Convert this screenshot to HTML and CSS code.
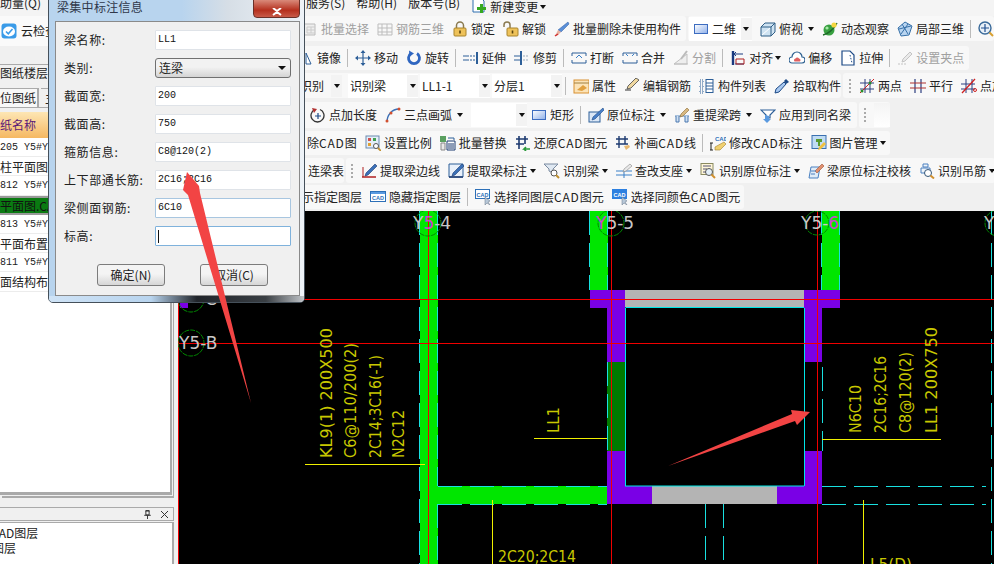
FILE: index.html
```html
<!DOCTYPE html>
<html lang="zh">
<head>
<meta charset="utf-8">
<title>梁集中标注信息</title>
<link rel="stylesheet" href="styles.css">
</head>
<body>
<svg class="sprite" xmlns="http://www.w3.org/2000/svg">
<symbol id="cloud" viewBox="0 0 16 16"><rect x="0.5" y="0.5" width="15" height="15" rx="3" fill="#3a9be8"/><ellipse cx="8" cy="8.5" rx="6" ry="5" fill="#fff"/><path d="M5 8.5l2.3 2.3L11.5 6" fill="none" stroke="#3a9be8" stroke-width="1.6"/></symbol>
<symbol id="newc" viewBox="0 0 16 16"><path d="M2 1h8l3 3v11H2z" fill="#fff" stroke="#2e6fb0"/><path d="M9 7h3v3h3v3h-3v3H9v-3H6v-3h3z" fill="#35a820"/></symbol>
<symbol id="sel" viewBox="0 0 16 16"><path d="M2 3h11v11H2z" fill="#eee" stroke="#bbb"/><path d="M5 6h8M5 9h8M5 12h8M5 6v6M9 6v6" stroke="#ccc"/></symbol>
<symbol id="r3d" viewBox="0 0 16 16"><path d="M1 3h14v11H1zM5 3v11M10 3v11M1 7h14M1 11h14" fill="none" stroke="#bdbdbd"/></symbol>
<symbol id="lock" viewBox="0 0 16 16"><path d="M4.5 7V4.5a3.5 3.5 0 0 1 7 0V7" fill="none" stroke="#8a7a50" stroke-width="1.5"/><rect x="2" y="7" width="12" height="8" rx="1" fill="#eec25a" stroke="#a8842c"/><path d="M8 9.5v3" stroke="#5a4510" stroke-width="1.6"/></symbol>
<symbol id="unlock" viewBox="0 0 16 16"><path d="M1 6V4a3 3 0 0 1 6 0v3" fill="none" stroke="#8a7a50" stroke-width="1.5"/><rect x="4" y="7" width="11" height="8" rx="1" fill="#eec25a" stroke="#a8842c"/><path d="M9.5 9.5v3" stroke="#5a4510" stroke-width="1.6"/></symbol>
<symbol id="del" viewBox="0 0 16 16"><path d="M14 1l1 2-8 8-3-2z" fill="#5a8fd8" stroke="#2c5aa0" stroke-width=".5"/><path d="M4 9l3 2-3 3-3 1z" fill="#e8b0a0"/><path d="M1 15l3-2" stroke="#d03030" stroke-width="1.5"/></symbol>
<symbol id="d2" viewBox="0 0 16 16"><defs><linearGradient id="bl" x2="1" y2="1"><stop offset="0" stop-color="#fff"/><stop offset="1" stop-color="#8fb0ea"/></linearGradient></defs><rect x="1.5" y="3.5" width="13" height="9" fill="url(#bl)" stroke="#3c6cc0"/></symbol>
<symbol id="cube" viewBox="0 0 16 16"><path d="M1 6l4-4h10v9l-4 4H1z" fill="#cfe3f2" stroke="#2f5e86"/><path d="M1 6h10v9M11 6l4-4" fill="none" stroke="#2f5e86"/><path d="M2 14l8-7" stroke="#fff"/></symbol>
<symbol id="orbit" viewBox="0 0 16 16"><circle cx="7" cy="9" r="5.5" fill="#38a040"/><path d="M1 14C6 13 12 8 15 2" stroke="#1e6a28" stroke-width="1.4" fill="none"/><circle cx="12" cy="4" r="2.6" fill="#f4d640"/><circle cx="5" cy="7" r="1.6" fill="#a8e8a8"/></symbol>
<symbol id="l3d" viewBox="0 0 16 16"><path d="M8 1l7 4-3 9-8 1-3-8z" fill="#b8d4f0" stroke="#3670a8"/><path d="M5 3l6 10M11 3L4 13M2 8l12-3" stroke="#3670a8"/></symbol>
<symbol id="zoom" viewBox="0 0 16 16"><circle cx="7" cy="7" r="6" fill="#e8f0f8" stroke="#3a6a9a" stroke-width="1.4"/><path d="M7 3v8M3 7h8" stroke="#1f4f90" stroke-width="1.2"/><path d="M11.5 11.5l3.5 3.5" stroke="#d8a030" stroke-width="2"/></symbol>
<symbol id="mirror" viewBox="0 0 16 16"><path d="M8 3l5 11H8zM6 3v11" fill="#fff" stroke="#2d5f98"/></symbol>
<symbol id="move" viewBox="0 0 16 16"><path d="M8 1v14M1 8h14" stroke="#2d5f98" stroke-width="1.2"/><path d="M8 0l2.5 3h-5zM8 16l2.5-3h-5zM0 8l3-2.5v5zM16 8l-3-2.5v5z" fill="#2d5f98"/></symbol>
<symbol id="rotate" viewBox="0 0 16 16"><path d="M5 3.5a5.5 5.5 0 1 0 6 0" fill="none" stroke="#2f66c0" stroke-width="2.8"/><path d="M3 .5l5 3-4.5 3z" fill="#2f66c0"/></symbol>
<symbol id="extend" viewBox="0 0 16 16"><path d="M14 2v12" stroke="#2d5f98" stroke-width="2"/><path d="M0 6h6M0 10h6" stroke="#2d5f98"/><path d="M7 6h5M7 10h5" stroke="#2d5f98" stroke-dasharray="2 1"/></symbol>
<symbol id="trim" viewBox="0 0 16 16"><path d="M7 1v14" stroke="#2d5f98" stroke-width="2"/><path d="M0 6h6M0 10h6" stroke="#2d5f98"/><path d="M9 6h6M9 10h6" stroke="#9ab" stroke-dasharray="2 1"/></symbol>
<symbol id="brk" viewBox="0 0 16 16"><path d="M1 6V3h14v3M1 10v3h14v-3" fill="none" stroke="#2d5f98"/><path d="M5 8l3-3 3 3" fill="none" stroke="#3a80c8"/></symbol>
<symbol id="merge" viewBox="0 0 16 16"><path d="M1 6V3h14v3M1 10v3h14v-3" fill="none" stroke="#2d5f98"/><path d="M4 4l2 2M12 4l-2 2" stroke="#3a80c8"/></symbol>
<symbol id="split" viewBox="0 0 16 16"><path d="M1 14L14 4v10zM1 14h14" fill="#eee" stroke="#c0c0c0"/><path d="M14 1L8 9" stroke="#bbb" stroke-width="2"/></symbol>
<symbol id="align" viewBox="0 0 16 16"><path d="M3 1v14" stroke="#1a3a80" stroke-width="2.4"/><path d="M5 4h8M5 14h9" stroke="#1a3a80"/><path d="M6 2L4 4l2 2" fill="none" stroke="#1a3a80"/><path d="M6 9h8v5H6z" fill="none" stroke="#b02020"/></symbol>
<symbol id="offset" viewBox="0 0 16 16"><path d="M3 13a3 3 0 0 1 0-6 5 5 0 0 1 10 0 3 3 0 0 1 0 6z" fill="#fff" stroke="#2d6090" stroke-width="1.2"/><path d="M5.500 11.500a2 2 0 0 1 1-3 2 2 0 0 1 3.500 0 2 2 0 0 1 1 3z" fill="#e06060"/></symbol>
<symbol id="stretch" viewBox="0 0 16 16"><path d="M2 1h8l4 4v10H2z" fill="#fff" stroke="#1d4a86" stroke-width="1.2"/><path d="M10 5l2 8" stroke="#1d4a86" stroke-dasharray="1.500 1.500"/></symbol>
<symbol id="grip" viewBox="0 0 16 16"><path d="M1 14h8" stroke="#c4c4c4" stroke-dasharray="2 1"/><path d="M13 2l2 2-7 7-3 1 1-3z" fill="#eaeaea" stroke="#c4c4c4"/></symbol>
<symbol id="prop" viewBox="0 0 16 16"><rect x="1" y="2" width="15" height="13" fill="#fbe3b8" stroke="#d89030"/><path d="M1 5h15" stroke="#a08040"/><path d="M4 12l6-5 4 3-5 3z" fill="#e0a040"/></symbol>
<symbol id="edit" viewBox="0 0 16 16"><path d="M1 12h6" stroke="#333"/><path d="M15 2l-8 8-4 1 1-3 8-8z" fill="#f0d8a0" stroke="#444" stroke-width=".8"/></symbol>
<symbol id="list" viewBox="0 0 16 16"><path d="M1 2h3v3H1zM1 7h3v3H1zM1 12h3v3H1z" fill="none" stroke="#2d5f98" stroke-dasharray="1 1"/><rect x="7" y="1.500" width="7" height="13" fill="#fff" stroke="#2d5f98"/><path d="M7 5h7M7 8h7M7 11h7" stroke="#2d5f98"/></symbol>
<symbol id="pick" viewBox="0 0 16 16"><path d="M12 1l3 3-3 2-2-3z" fill="#1d4a86"/><path d="M10 4l2 2-7 8-4 1 1-4z" fill="#a8c8f0" stroke="#1d4a86"/></symbol>
<symbol id="two" viewBox="0 0 16 16"><path d="M6 1v14M11 1v14M1 5h14M1 11h14" stroke="#2d3f80"/><path d="M1 15L15 1" stroke="#d02020"/><circle cx="3" cy="13" r="1.500" fill="#2a8a2a"/><circle cx="11" cy="5" r="1.500" fill="#2a8a2a"/></symbol>
<symbol id="par" viewBox="0 0 16 16"><path d="M5 1v14M11 1v14" stroke="#2d3f80" stroke-width="1.200"/><path d="M0 5h16M0 10h16" stroke="#b03030" stroke-width="1.200"/></symbol>
<symbol id="ptan" viewBox="0 0 16 16"><path d="M5 1v14M11 1v14M0 6h14M0 11h14" stroke="#2d3f80"/><path d="M1 15L14 1" stroke="#d02020" stroke-width="1.300"/><circle cx="14" cy="12" r="1.500" fill="none" stroke="#d02020"/></symbol>
<symbol id="addl" viewBox="0 0 16 16"><path d="M5 2.500a6.500 6.500 0 1 0 5 0" fill="none" stroke="#333" stroke-width="1.300"/><path d="M2 1l5 1-3 4z" fill="#b03030"/><path d="M8 6v6M5 9h6" stroke="#1d4a86" stroke-width="1.200"/></symbol>
<symbol id="arc" viewBox="0 0 16 16"><path d="M2 15C2 8 7 2 14 2" fill="none" stroke="#3a70b8" stroke-width="1.400"/><circle cx="2" cy="14" r="1.500" fill="#d05030"/><circle cx="14" cy="2" r="1.500" fill="#d05030"/><circle cx="6" cy="6" r="1.500" fill="#d05030"/></symbol>
<symbol id="orig" viewBox="0 0 16 16"><rect x="1" y="5" width="11" height="10" fill="#dbe7f6" stroke="#2d5f98"/><path d="M15 1l1 2-9 9-3 1 1-3z" fill="#4a80c8" stroke="#1d4a86" stroke-width=".6"/></symbol>
<symbol id="respan" viewBox="0 0 16 16"><path d="M1 9h14" stroke="#5a8ac0"/><path d="M2 9v6h3V9M11 9v6h3V9" fill="#cfe0f2" stroke="#4a78b0"/><path d="M13 1l2 2-6 6-3 1 1-3z" fill="#d8b880" stroke="#8a6a30" stroke-width=".6"/></symbol>
<symbol id="apply" viewBox="0 0 16 16"><path d="M1 3h14l-5 5v3H6V8z" fill="#fff" stroke="#2d5f98" stroke-width="1.200"/><path d="M5 8v4H3l4 4 4-4H9V9" fill="#5a9ae0"/></symbol>
<symbol id="scale" viewBox="0 0 16 16"><rect x="1" y="1" width="13" height="12" fill="#e4eef8" stroke="#6a8ab0"/><rect x="3" y="3" width="3" height="3" fill="#d05050"/><rect x="8" y="3" width="3" height="3" fill="#40a050"/><rect x="3" y="8" width="3" height="3" fill="#e0a030"/><circle cx="11" cy="11" r="2.500" fill="#fff" stroke="#555"/><path d="M13 13l3 3" stroke="#c09030" stroke-width="1.800"/></symbol>
<symbol id="repl" viewBox="0 0 16 16"><rect x="0" y="1" width="6" height="6" fill="#5aa060"/><path d="M1 8h4v7H1z" fill="#e8e8e8" stroke="#888"/><path d="M7 6h8v9H7z" fill="#fff" stroke="#1d3a70"/><path d="M9 8v6M11 8v6M13 8v6" stroke="#1d3a70"/><path d="M8 3h6v2" fill="none" stroke="#2d5f98"/></symbol>
<symbol id="restore" viewBox="0 0 16 16"><path d="M4 1v13M10 1v8M1 4h12M1 9h8" stroke="#1d3a70" stroke-width="1.600"/><path d="M15 14H9l2-2M9 14l2 2" fill="none" stroke="#2a9a3a" stroke-width="1.600"/></symbol>
<symbol id="addc" viewBox="0 0 16 16"><path d="M4 1v12M10 1v8M1 4h12M1 9h12" stroke="#1d3a70" stroke-width="1.400"/><path d="M15 12l-1-2-5 1 2 4z" fill="#e8b870"/></symbol>
<symbol id="modc" viewBox="0 0 16 16"><text x="5" y="6" font-size="6" font-family="Liberation Sans" font-weight="700" fill="#2d70b8">CAD</text><path d="M1 8v7M0 8h3M0 15h3" stroke="#222"/><path d="M14 7l2 2-6 6H5v-3z" fill="#f0d070" stroke="#a08030" stroke-width=".6"/></symbol>
<symbol id="img" viewBox="0 0 16 16"><rect x="1" y="0.500" width="14" height="13" fill="#c0dcf4" stroke="#3a70b0"/><path d="M5 4h6v3H9v4H7V7H5z" fill="#5a9a30"/><path d="M15 9l-5 5-3 1 1-3 5-5z" fill="#f0c040"/></symbol>
<symbol id="edge" viewBox="0 0 16 16"><path d="M1 14h14" stroke="#b02020" stroke-width="1.500"/><path d="M2 4v10" stroke="#b02020"/><path d="M14 1l2 2-9 9-3 1 1-3z" fill="#3a70b8" stroke="#1d3a70" stroke-width=".6"/></symbol>
<symbol id="lab" viewBox="0 0 16 16"><path d="M1 1h14v13H1z" fill="#e8f0fa" stroke="#2d5f98"/><path d="M1 14h14" stroke="#1d3a70" stroke-width="1.500"/><path d="M14 1l2 2-9 9-3 1 1-3z" fill="#3a70b8" stroke="#1d3a70" stroke-width=".6"/></symbol>
<symbol id="idb" viewBox="0 0 16 16"><path d="M0 1h14l-5 5v4L5 8V6z" fill="#dfe8f2" stroke="#7a8aa0"/><circle cx="10" cy="10" r="3" fill="#fff" stroke="#555"/><path d="M12 12l3 3" stroke="#c09030" stroke-width="2"/></symbol>
<symbol id="supp" viewBox="0 0 16 16"><path d="M0 8h16M0 12h16M8 8v7" stroke="#3a80c8"/><path d="M14 1l2 2-6 5-3 1 1-3z" fill="#e8e8e8" stroke="#888" stroke-width=".6"/></symbol>
<symbol id="ido" viewBox="0 0 16 16"><rect x="1" y="0.500" width="12" height="11" fill="#fff6d8" stroke="#8a8a60"/><path d="M3 3h8M3 6h4M3 9h3" stroke="#557"/><circle cx="9" cy="9" r="3.500" fill="#e4f0fa" stroke="#555"/><path d="M11.500 11.500l3.500 3.500" stroke="#d09030" stroke-width="2"/></symbol>
<symbol id="chk" viewBox="0 0 16 16"><path d="M3 4h9l-2 11H1z" fill="#e0ecf8" stroke="#4a80c0"/><path d="M14 1l2 2-7 7-2-2z" fill="#e09070" stroke="#a05030" stroke-width=".6"/><path d="M3 8h5M3 11h4" stroke="#4a80c0"/></symbol>
<symbol id="hang" viewBox="0 0 16 16"><path d="M4 1h5v3H4zM2 5h9v5H2z" fill="#eef4fa" stroke="#4a80c0"/><circle cx="9" cy="10" r="3.500" fill="#fff" stroke="#357"/><path d="M11.500 12.500l3.500 3" stroke="#d09030" stroke-width="2"/></symbol>
<symbol id="cadb" viewBox="0 0 16 16"><rect x="0.500" y="2.500" width="15" height="10" fill="#fff" stroke="#2d70b8"/><rect x="1" y="3" width="14" height="2" fill="#5a9ae0"/><text x="8" y="11" text-anchor="middle" font-size="5.500" font-family="Liberation Sans" font-weight="700" fill="#2d70b8">CAD</text></symbol>
<symbol id="cads" viewBox="0 0 16 16"><rect x="0.500" y="0.500" width="14" height="9" fill="#fff" stroke="#2d70b8"/><text x="7.500" y="7.500" text-anchor="middle" font-size="5.500" font-family="Liberation Sans" font-weight="700" fill="#2d70b8">CAD</text><path d="M10 8v8l2-2 3 2-2-3 2-1z" fill="#b8c8d8" stroke="#678" stroke-width=".5"/></symbol>
<symbol id="cadc" viewBox="0 0 16 16"><rect x="0" y="0" width="15" height="10" fill="#2d80e0"/><text x="7.500" y="7.500" text-anchor="middle" font-size="5.500" font-family="Liberation Sans" font-weight="700" fill="#fff">CAD</text><path d="M10 8v8l2-2 3 2-2-3 2-1z" fill="#b8c8d8" stroke="#678" stroke-width=".5"/></symbol>
</svg>

<div class="app">
  <div class="menu">
    <span class="menu-left">助量(Q)</span>
    <span class="menu-item">服务(S)</span>
    <span class="menu-item m-help">帮助(H)</span>
    <span class="menu-item m-ver">版本号(B)</span>
    <span class="it m-new"><svg class="ic"><use href="#newc"/></svg>新建变更<i class="ar ar-new"></i></span>
  </div>
  <div class="body">
    <aside class="side">
      <div class="side-cloud"><svg class="ic"><use href="#cloud"/></svg><span>云检查</span></div>
      <div class="side-tab">图纸楼层构件</div>
      <div class="side-tabs"><span class="tab-a">位图纸</span><span class="tab-b">主</span></div>
      <div class="side-list">
        <div class="l-head">纸名称</div>
        <div class="l-row l-mono">205 Y5#Y6</div>
        <div class="l-row">柱平面图</div>
        <div class="l-row l-mono">812 Y5#Y6</div>
        <div class="l-row l-sel">平面图.CAD</div>
        <div class="l-row l-mono">813 Y5#Y6</div>
        <div class="l-row">平面布置</div>
        <div class="l-row l-mono">811 Y5#Y6</div>
        <div class="l-row">面结构布</div>
      </div>
      <div class="side-panelhead"><svg class="x" viewBox="0 0 9 11"><path d="M2.500 1h4v5h-4zM.500 6.500h8M4.500 7v4M2 1h5" fill="none" stroke="#111"/></svg><svg class="x" viewBox="0 0 9 9"><path d="M1 1l7 7M8 1L1 8" stroke="#333" fill="none"/></svg></div>
      <div class="side-panel"><div>CAD图层</div><div>图层</div></div>
    </aside>
    <main class="main">
      <div class="tb r1">
        <div class="pill p1a">
          <span class="it off"><svg class="ic"><use href="#sel"/></svg>批量选择</span>
          <span class="it off"><svg class="ic"><use href="#r3d"/></svg>钢筋三维</span>
          <span class="it"><svg class="ic"><use href="#lock"/></svg>锁定</span>
          <span class="it"><svg class="ic"><use href="#unlock"/></svg>解锁</span>
          <span class="it"><svg class="ic"><use href="#del"/></svg>批量删除未使用构件</span>
        </div>
        <div class="pill p1b">
          <span class="it hi"><svg class="ic"><use href="#d2"/></svg>二维<b class="drop"><i class="ar"></i></b></span>
          <span class="it"><svg class="ic"><use href="#cube"/></svg>俯视<i class="ar"></i></span>
          <span class="it"><svg class="ic"><use href="#orbit"/></svg>动态观察</span>
          <span class="it"><svg class="ic"><use href="#l3d"/></svg>局部三维</span>
          <i class="sep"></i>
          <span class="it"><svg class="ic"><use href="#zoom"/></svg></span>
        </div>
      </div>
      <div class="tb r2">
        <div class="pill p2">
          <span class="it"><svg class="ic"><use href="#mirror"/></svg>镜像</span><i class="sep"></i>
          <span class="it"><svg class="ic"><use href="#move"/></svg>移动</span>
          <span class="it"><svg class="ic"><use href="#rotate"/></svg>旋转</span><i class="sep"></i>
          <span class="it"><svg class="ic"><use href="#extend"/></svg>延伸</span>
          <span class="it"><svg class="ic"><use href="#trim"/></svg>修剪</span><i class="sep"></i>
          <span class="it"><svg class="ic"><use href="#brk"/></svg>打断</span>
          <span class="it"><svg class="ic"><use href="#merge"/></svg>合并</span>
          <span class="it off"><svg class="ic"><use href="#split"/></svg>分割</span><i class="sep"></i>
          <span class="it"><svg class="ic"><use href="#align"/></svg>对齐<i class="ar"></i></span>
          <span class="it"><svg class="ic"><use href="#offset"/></svg>偏移</span>
          <span class="it"><svg class="ic"><use href="#stretch"/></svg>拉伸</span><i class="sep"></i>
          <span class="it off"><svg class="ic"><use href="#grip"/></svg>设置夹点</span>
        </div>
      </div>
      <div class="tb r3">
        <div class="pill p3a">
          <span class="it it-t">识别</span><b class="drop d-plain"><i class="ar"></i></b>
          <span class="combo">识别梁<b class="drop"><i class="ar"></i></b></span>
          <span class="combo">LL1-1<b class="drop"><i class="ar"></i></b></span>
          <span class="combo c-last">分层1<b class="drop"><i class="ar"></i></b></span>
          <i class="sep"></i>
          <span class="it"><svg class="ic"><use href="#prop"/></svg>属性</span>
          <span class="it"><svg class="ic"><use href="#edit"/></svg>编辑钢筋</span>
          <span class="it"><svg class="ic"><use href="#list"/></svg>构件列表</span>
          <span class="it"><svg class="ic"><use href="#pick"/></svg>拾取构件</span>
        </div>
        <div class="pill p3b">
          <i class="dots"></i>
          <span class="it"><svg class="ic"><use href="#two"/></svg>两点</span>
          <span class="it"><svg class="ic"><use href="#par"/></svg>平行</span>
          <span class="it"><svg class="ic"><use href="#ptan"/></svg>点加</span>
        </div>
      </div>
      <div class="tb r4">
        <div class="pill p4a">
          <span class="it"><svg class="ic"><use href="#addl"/></svg>点加长度</span>
          <span class="it"><svg class="ic"><use href="#arc"/></svg>三点画弧<i class="ar"></i></span>
          <span class="combo c-empty"><b class="drop"><i class="ar"></i></b></span>
          <span class="it"><svg class="ic"><use href="#d2"/></svg>矩形</span><i class="sep"></i>
          <span class="it"><svg class="ic"><use href="#orig"/></svg>原位标注<i class="ar"></i></span>
          <span class="it"><svg class="ic"><use href="#respan"/></svg>重提梁跨<i class="ar"></i></span>
          <span class="it"><svg class="ic"><use href="#apply"/></svg>应用到同名梁</span>
        </div>
        <div class="pill p4b"><i class="dots"></i><span class="blank"></span></div>
      </div>
      <div class="tb r5">
        <div class="pill p5">
          <span class="it it-t"><span>除<span class="lat">CAD</span>图</span></span>
          <span class="it"><svg class="ic"><use href="#scale"/></svg>设置比例</span>
          <span class="it"><svg class="ic"><use href="#repl"/></svg>批量替换</span>
          <span class="it"><svg class="ic"><use href="#restore"/></svg><span>还原<span class="lat">CAD</span>图元</span></span>
          <span class="it"><svg class="ic"><use href="#addc"/></svg><span>补画<span class="lat">CAD</span>线</span></span><i class="sep"></i>
          <span class="it"><svg class="ic"><use href="#modc"/></svg><span>修改<span class="lat">CAD</span>标注</span></span>
          <span class="it"><svg class="ic"><use href="#img"/></svg>图片管理<i class="ar"></i></span>
        </div>
      </div>
      <div class="tb r6">
        <div class="pill p6a"><span class="it it-t">连梁表</span></div>
        <div class="pill p6b">
          <i class="dots"></i>
          <span class="it"><svg class="ic"><use href="#edge"/></svg>提取梁边线</span>
          <span class="it"><svg class="ic"><use href="#lab"/></svg>提取梁标注<i class="ar"></i></span>
          <span class="it"><svg class="ic"><use href="#idb"/></svg>识别梁<i class="ar"></i></span>
          <span class="it"><svg class="ic"><use href="#supp"/></svg>查改支座<i class="ar"></i></span>
          <span class="it"><svg class="ic"><use href="#ido"/></svg>识别原位标注<i class="ar"></i></span>
          <span class="it"><svg class="ic"><use href="#chk"/></svg>梁原位标注校核</span>
          <span class="it"><svg class="ic"><use href="#hang"/></svg>识别吊筋<i class="ar"></i></span>
        </div>
      </div>
      <div class="tb r7">
        <div class="pill p7">
          <span class="it it-t">示指定图层</span>
          <span class="it"><svg class="ic"><use href="#cadb"/></svg>隐藏指定图层</span><i class="sep"></i>
          <span class="it"><svg class="ic"><use href="#cads"/></svg><span>选择同图层<span class="lat">CAD</span>图元</span></span>
          <span class="it"><svg class="ic"><use href="#cadc"/></svg><span>选择同颜色<span class="lat">CAD</span>图元</span></span>
        </div>
      </div>
      <svg class="canvas" viewBox="178 211 816 353" xmlns="http://www.w3.org/2000/svg">
        <rect x="178" y="211" width="816" height="353" fill="#000"/>
        <g fill="#00e600">
          <rect x="420" y="211" width="18" height="353"/>
          <rect x="590" y="211" width="18" height="79"/>
          <rect x="822" y="211" width="18" height="79"/>
          <rect x="438" y="486" width="169" height="18"/>
        </g>
        <g fill="#7a00e6">
          <rect x="590" y="290" width="35" height="18"/>
          <rect x="607" y="290" width="18" height="72"/>
          <rect x="607" y="451" width="18" height="53"/>
          <rect x="607" y="486" width="45" height="18"/>
          <rect x="777" y="486" width="45" height="18"/>
          <rect x="804" y="451" width="18" height="53"/>
          <rect x="804" y="290" width="36" height="18"/>
          <rect x="804" y="290" width="18" height="72"/>
          <rect x="180" y="300" width="8" height="8"/>
        </g>
        <rect x="607" y="362" width="18" height="89" fill="#007a00"/>
        <rect x="625" y="290" width="179" height="17" fill="#b4b4b4"/>
        <rect x="652" y="486" width="125" height="18" fill="#b4b4b4"/>
        <path class="cy" d="M625.500 308V486M804.500 308V486M625.500 307.500H804M625 486H804"/>
        <g class="cyd">
          <path d="M419.500 211V564M437.500 211V486M437.500 504V564M589.500 211V290M607.500 211V290M821.500 211V290M839.500 211V290"/>
          <path d="M438 486.500H607M438 504.500H607M822 486.500H986M822 504.500H986"/>
          <path d="M822.500 367V451M607.500 362V451M991.500 211V564M705.500 504V564M723.500 504V564"/>
        </g>
        <g class="rd">
          <path d="M178.500 211V564M178 299.500H994M178 343.500H994M428.500 211V564M611.500 211V564M817.500 211V564"/>
        </g>
        <g class="bub">
          <circle cx="428" cy="223" r="13"/>
          <circle cx="611" cy="223" r="13"/>
          <circle cx="817" cy="223" r="12"/>
          <circle cx="998" cy="223" r="13"/>
          <circle cx="191" cy="343" r="13"/>
          <circle cx="191" cy="299" r="13"/>
        </g>
        <g class="axis">
          <text x="413" y="229">Y<tspan class="pk">5</tspan>-4</text>
          <text x="596" y="229"><tspan class="pk">Y</tspan>5-5</text>
          <text x="801" y="229">Y5-<tspan class="pk">6</tspan></text>
          <text x="984" y="229">Y</text>
          <text x="179" y="349">Y5-B</text>
          <text x="205" y="305">C</text>
        </g>
        <g class="yl">
          <path d="M305 464.500H425M534 438.500H607M822 439.500H941M492.500 500V564M863.500 500V564"/>
        </g>
        <g class="dim">
          <text transform="translate(332 458) rotate(-90)" textLength="130" lengthAdjust="spacingAndGlyphs">KL9(1) 200X500</text>
          <text transform="translate(356 458) rotate(-90)" textLength="115" lengthAdjust="spacingAndGlyphs">C6@110/200(2)</text>
          <text transform="translate(381 458) rotate(-90)" textLength="103" lengthAdjust="spacingAndGlyphs">2C14;3C16(-1)</text>
          <text transform="translate(404 458) rotate(-90)" textLength="48" lengthAdjust="spacingAndGlyphs">N2C12</text>
          <text transform="translate(559 433) rotate(-90)" textLength="26" lengthAdjust="spacingAndGlyphs">LL1</text>
          <text transform="translate(861 433) rotate(-90)" textLength="48" lengthAdjust="spacingAndGlyphs">N6C10</text>
          <text transform="translate(886 433) rotate(-90)" textLength="77" lengthAdjust="spacingAndGlyphs">2C16;2C16</text>
          <text transform="translate(911 433) rotate(-90)" textLength="81" lengthAdjust="spacingAndGlyphs">C8@120(2)</text>
          <text transform="translate(937 433) rotate(-90)" textLength="106" lengthAdjust="spacingAndGlyphs">LL1 200X750</text>
          <text x="498" y="562" textLength="78" lengthAdjust="spacingAndGlyphs">2C20;2C14</text>
          <text x="870" y="570" textLength="42" lengthAdjust="spacingAndGlyphs">L5(D)</text>
        </g>
      </svg>
    </main>
  </div>

  <section class="dlg">
    <header class="dlg-title"><span>梁集中标注信息</span><span class="dlg-close"><svg viewBox="0 0 12 8"><path d="M2 0l4 3 4-3M2 7l4-3 4 3" fill="none" stroke="#fff" stroke-width="2"/></svg></span></header>
    <div class="dlg-body">
      <div class="field"><label>梁名称:</label><span class="inp">LL1</span></div>
      <div class="field"><label>类别:</label><span class="sel-box">连梁<i class="ar ar-big"></i></span></div>
      <div class="field"><label>截面宽:</label><span class="inp">200</span></div>
      <div class="field"><label>截面高:</label><span class="inp">750</span></div>
      <div class="field"><label>箍筋信息:</label><span class="inp">C8@120(2)</span></div>
      <div class="field"><label>上下部通长筋:</label><span class="inp">2C16;2C16</span></div>
      <div class="field"><label>梁侧面钢筋:</label><span class="inp inp-blue">6C10</span></div>
      <div class="field"><label>标高:</label><span class="inp inp-focus"><i class="caret"></i></span></div>
      <div class="dlg-btns"><button class="btn">确定(N)</button><button class="btn">取消(C)</button></div>
    </div>
  </section>

  <svg class="marks" viewBox="0 0 994 564" xmlns="http://www.w3.org/2000/svg">
    <polygon points="187,172 199,186 200,193 251,403 188,195 183,190"/>
    <polygon points="810,412 797,425 795,421 668,466 792,414 791,410"/>
  </svg>
</div>
</body>
</html>
```

FILE: styles.css
```css
* { box-sizing: border-box; }
html, body { margin: 0; padding: 0; }
body { width: 994px; height: 564px; overflow: hidden; background: #f0f0f0; font: 12px/16px "Noto Sans CJK SC", "Liberation Sans", sans-serif; color: #222; }
.sprite { position: absolute; width: 0; height: 0; }
.app { position: relative; width: 994px; height: 564px; overflow: hidden; }

.menu { display: flex; height: 16px; overflow: hidden; background: #f4f4f4; align-items: flex-start; line-height: 5px; }
.menu-left { width: 306px; }
.menu-item { margin-right: 11px; }
.m-new { margin-left: 0; line-height: 5px; height: 12px; align-items: flex-start; }
.m-new .ic { margin-top: -2px; }
.ar-new { margin: 1px 0 0 10px; }

.body { display: flex; height: 548px; }
.side { width: 178px; flex: none; display: flex; flex-direction: column; position: relative; }
.side-cloud { height: 30px; display: flex; align-items: center; gap: 4px; padding-left: 1px; background: #fafafa; }
.side-tab { margin-top: 18px; height: 17px; border-top: 1px solid #aaa; white-space: nowrap; overflow: hidden; line-height: 16px; font-size: 12px; }
.side-tabs { margin-top: 7px; display: flex; height: 20px; gap: 2px; line-height: 18px; border-bottom: 1px solid #aaa; }
.tab-a { width: 39px; background: #f8f8f8; border-top: 1px solid #aaa; border-right: 2px solid #aaa; white-space: nowrap; overflow: hidden; }
.tab-b { width: 30px; padding-left: 4px; border-top: 1px solid #aaa; }
.side-list { margin-top: 4px; width: 172px; height: 383px; background: #fff; border-right: 2px solid #aaa; border-bottom: 3px solid #aaa; box-shadow: 1px 1px 0 #f0f0f0, 2px 3px 0 #aaa; }
.l-head { height: 26px; line-height: 25px; background: linear-gradient(#fde6b4, #f5b862); color: #5b1a78; font-size: 12px; }
.l-row { height: 19.200px; line-height: 19px; white-space: nowrap; overflow: hidden; border-bottom: 1px solid #ececec; }
.l-mono { font: 10px/19px "Liberation Mono", monospace; }
.l-sel { background: #0a7a12; color: #111; border-top: 2px solid #999; border-bottom: 2px solid #999; line-height: 15px; }
.side-panelhead { margin-top: 12px; width: 174px; height: 14px; background: #f0f0f0; border: 1px solid #aaa; border-left: 0; display: flex; justify-content: flex-end; align-items: center; gap: 8px; padding-right: 4px; }
.x { width: 9px; height: 9px; flex: none; }
.side-panel { margin-top: 1px; width: 175px; flex: 1; background: #fff; border-top: 1px solid #aaa; border-right: 2px solid #aaa; line-height: 15px; font-size: 12px; padding-top: 2px; margin-left: -1px; white-space: nowrap; overflow: hidden; }
.side-panel div:first-child { margin-left: -8px; }
.side-panel div:last-child { margin-left: -7px; }

.main { width: 816px; display: flex; flex-direction: column; }
.tb { display: flex; gap: 2px; flex: none; }
.r1 { height: 25px; }
.r2 { height: 24px; margin-top: 5px; }
.r3 { height: 25px; margin-top: 3px; }
.r4 { height: 26px; margin-top: 4px; }
.r5 { height: 24px; margin-top: 3px; }
.r6 { height: 25px; margin-top: 3px; }
.r7 { height: 24px; margin-top: 2px; }
.pill { display: flex; align-items: center; gap: 8px; background: #f8f8f8; border-radius: 3px; white-space: nowrap; }
.p1a { width: 508px; padding-left: 124px; }
.p1b { flex: 1; padding-left: 1px; }
.p2 { width: 791px; padding-left: 120px; }
.p3a { width: 668px; padding-left: 122px; gap: 8px; }
.p3b { flex: 1; padding-left: 4px; }
.p4a { width: 679px; padding-left: 132px; }
.p4b { width: 31px; padding-left: 3px; }
.p5 { width: 712px; padding-left: 129px; }
.p6a { width: 174px; padding-left: 130px; }
.p6b { flex: 1; padding-left: 3px; gap: 8px; }
.p7 { width: 566px; padding-left: 124px; }

.it { display: inline-flex; align-items: center; gap: 3px; flex: none; }
.lat { letter-spacing: .8px; }
.off { color: #a0a0a0; }
.ic { width: 16px; height: 16px; flex: none; }
.hi { background: #fff; padding: 2px 0 2px 4px; height: 24px; }
.sep { width: 1px; height: 18px; background: #bbb; flex: none; margin: 0 -1px 0 -2px; }
.dots { width: 2px; height: 14px; flex: none; background: repeating-linear-gradient(#aaa 0 2px, transparent 2px 4px); margin-left: 2px; }
.ar { display: inline-block; width: 0; height: 0; border: 3px solid transparent; border-top: 4px solid #111; border-bottom: 0; margin-left: -1px; flex: none; }
.p1b .ar, .p4a .ar { margin-left: 2px; }
.p6b .ar { margin-left: 0; }
.drop { display: inline-flex; align-items: center; justify-content: center; width: 11px; height: 22px; background: #f3f3f3; margin-left: auto; flex: none; }
.pill .drop .ar { margin: 0; }
.hi .drop { margin-left: 2px; }
.d-plain { margin: 0 0 0 -1px; }
.combo { display: flex; align-items: center; width: 70px; height: 24px; background: #fff; padding-left: 2px; flex: none; margin: 0 -6px 0 -2px; font-size: 12px; }
.combo + .combo { margin-left: 0; }
.c-last { margin-right: -3px; }
.c-empty { width: 56px; margin: 0 -4px 0 0; }
.blank { width: 24px; height: 24px; background: linear-gradient(#f4f4f4, #fff); }

.canvas { display: block; width: 816px; height: 353px; margin-top: 2px; flex: none; }
.cy { fill: none; stroke: #00e6e6; stroke-width: 1; }
.cyd path { fill: none; stroke: #19e0e0; stroke-width: 1; stroke-dasharray: 24 8; }
.rd path { fill: none; stroke: #f00000; stroke-width: 1; }
.bub circle { fill: none; stroke: #008a00; stroke-width: 1; stroke-dasharray: 5 1; }
.axis text { font: 17px "DejaVu Sans", sans-serif; fill: #c8c8c8; }
.pk { fill: #d040d8; }
.yl path { fill: none; stroke: #f0f000; stroke-width: 1; }
.dim text { font: 16px "DejaVu Sans", sans-serif; fill: #c8c800; }

.dlg { position: absolute; left: 48px; top: -8px; width: 257px; height: 311px; border: 1px solid #45505a; border-radius: 5px; background: linear-gradient(90deg, #b8d4ee 0 52%, #d6dee6 70%, #eef3f8 100%); padding: 0 4px 6px 6px; display: flex; flex-direction: column; }
.dlg::after { content: ""; position: absolute; left: 0; right: 0; bottom: 0; height: 6px; border-radius: 0 0 4px 4px; background: linear-gradient(90deg, #cfe3f6 0, #b8d4ee 40%, #20242a 58%, #3a3f44 85%, #c0c4c8 100%); }
.dlg-title { height: 28px; flex: none; display: flex; justify-content: space-between; padding: 6px 0 0 2px; font-size: 12px; line-height: 16px; color: #30384a; letter-spacing: .3px; }
.dlg-close { width: 47px; height: 19px; background: linear-gradient(#d98a7a, #b5301e 60%, #c85a48); border: 1px solid #6a3028; border-radius: 0 0 4px 4px; display: flex; align-items: flex-end; justify-content: center; padding-bottom: 1px; }
.dlg-close svg { width: 12px; height: 8px; }
.dlg-body { flex: 1; background: #f0f0f0; border: 1px solid #8a8a8a; padding: 8px 8px 0 8px; display: flex; flex-direction: column; gap: 8px; position: relative; z-index: 1; }
.field { display: flex; align-items: center; height: 20px; }
.field label { width: 91px; flex: none; font-size: 12px; letter-spacing: .6px; color: #222; white-space: nowrap; }
.inp { width: 136px; height: 20px; background: #fff; border: 1px solid #dfe3e8; border-radius: 1px; font: 10px/18px "Liberation Mono", monospace; padding-left: 2px; color: #111; }
.inp-blue { border-color: #a8c6e0; }
.inp-focus { border-color: #7fb2dc; }
.caret { display: block; width: 1px; height: 13px; background: #111; margin-top: 3px; }
.sel-box { width: 136px; height: 20px; display: flex; align-items: center; justify-content: space-between; padding: 0 4px 0 3px; border: 1px solid #707070; border-radius: 3px; background: linear-gradient(#f2f2f2 45%, #d4d4d4); font-size: 12px; }
.ar-big { border-width: 4px; border-top-width: 4px; border-bottom: 0; }
.dlg-btns { display: flex; justify-content: space-between; padding: 0 23px 0 33px; margin-top: 10px; }
.btn { width: 68px; height: 22px; padding: 0; border: 1px solid #7c7c7c; border-radius: 3px; background: linear-gradient(#f4f4f4 45%, #d6d6d6); font: 12px/18px "Noto Sans CJK SC", sans-serif; color: #222; }

.marks { position: absolute; left: 0; top: 0; width: 994px; height: 564px; pointer-events: none; z-index: 2; }
.marks polygon { fill: #f24444; }
```
